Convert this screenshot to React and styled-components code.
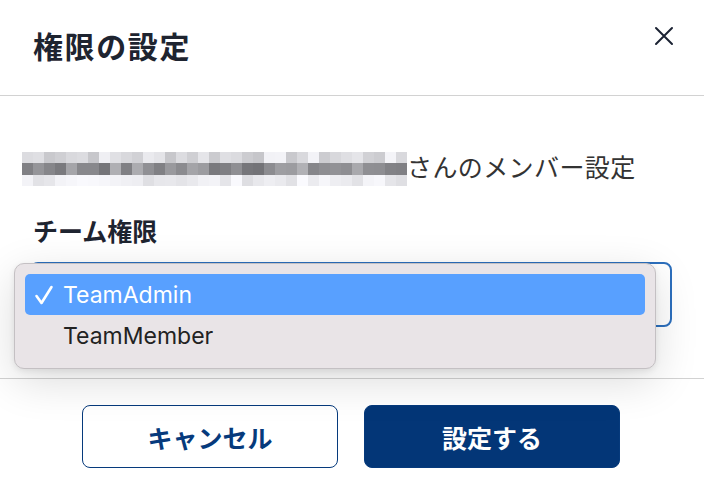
import React from 'react'
import styled, { createGlobalStyle } from 'styled-components'

const GlobalStyle = createGlobalStyle`
  html, body {
    margin: 0;
    padding: 0;
    background: #ffffff;
  }
  body {
    font-family: "Noto Sans CJK JP", "Noto Sans", sans-serif;
    color: #1e2430;
  }
`

// pseudo random greys for the pixelated name
function makeBlocks() {
  let seed = 7
  const rand = () => {
    seed = (seed * 9301 + 49297) % 233280
    return seed / 233280
  }
  const rows = [
    [195, 245],
    [112, 180],
    [222, 250],
  ]
  return rows.map(([lo, hi]) =>
    Array.from({ length: 35 }, () => Math.round(lo + rand() * (hi - lo)))
  )
}

const blocks = makeBlocks()

function App() {
  return (
    <>
      <GlobalStyle />
      <Modal>
        <Header>
          <Title>権限の設定</Title>
          <CloseButton aria-label="close">
            <svg width="20" height="20" viewBox="0 0 20 20">
              <path d="M2 2 L18 18 M18 2 L2 18" stroke="#1b2233" strokeWidth="2" strokeLinecap="round" />
            </svg>
          </CloseButton>
        </Header>
        <Body>
          <MemberLine>
            <Blurred>
              {blocks.map((row, r) =>
                row.map((g, c) => (
                  <Block key={r + '-' + c} style={{ background: `rgb(${g},${g},${g + 4})` }} />
                ))
              )}
            </Blurred>
            <span>さんのメンバー設定</span>
          </MemberLine>
          <Label>チーム権限</Label>
          <SelectWrap>
            <SelectBox />
            <Menu>
              <Option selected>
                <Check>
                  <svg width="20" height="20" viewBox="0 0 20 20">
                    <path d="M2.5 11 L7.5 18 L17.5 2" fill="none" stroke="#fff" strokeWidth="2.6" strokeLinecap="round" strokeLinejoin="round" />
                  </svg>
                </Check>
                TeamAdmin
              </Option>
              <Option>TeamMember</Option>
            </Menu>
          </SelectWrap>
        </Body>
        <Footer>
          <Button>キャンセル</Button>
          <Button primary>設定する</Button>
        </Footer>
      </Modal>
    </>
  )
}

export default App

const Modal = styled.div`
  width: 704px;
  height: 486px;
  background: #fff;
  overflow: hidden;
`

const Header = styled.div`
  height: 96px;
  box-sizing: border-box;
  display: flex;
  justify-content: space-between;
  align-items: flex-start;
  padding: 26px 30px 0 33px;
  border-bottom: 1px solid #d2d2d2;
`

const Title = styled.h1`
  margin: 0;
  font-size: 30px;
  line-height: 38px;
  font-weight: 700;
  letter-spacing: 1.6px;
  color: #1e2430;
`

const CloseButton = styled.button`
  border: none;
  background: transparent;
  padding: 0;
  margin-top: 0;
  width: 20px;
  height: 20px;
  display: flex;
`

const Body = styled.div`
  padding: 55px 32px 0 33px;
`

const MemberLine = styled.div`
  display: flex;
  align-items: center;
  height: 36px;
  margin-left: -11px;
  font-size: 25px;
  letter-spacing: 0.4px;
  color: #333;
  span {
    margin-top: -7px;
  }
`

const Blurred = styled.div`
  display: grid;
  grid-template-columns: repeat(35, 11px);
  grid-auto-rows: 11.5px;
`

const Block = styled.div``

const Label = styled.div`
  margin-top: 26px;
  font-size: 25px;
  line-height: 34px;
  font-weight: 700;
  color: #1e2430;
`

const SelectWrap = styled.div`
  position: relative;
  margin: 15px 0 0 -3px;
  width: 642px;
`

const SelectBox = styled.div`
  height: 65px;
  box-sizing: border-box;
  border: 2px solid #2c6fbd;
  border-radius: 8px;
  background: #fff;
`

const Menu = styled.div`
  position: absolute;
  left: -16px;
  top: 1px;
  width: 642px;
  box-sizing: border-box;
  padding: 10px 10px 12px;
  background: #e9e4e7;
  border: 1px solid #c4c0c3;
  border-radius: 10px;
  box-shadow: 0 12px 44px rgba(0, 0, 0, 0.14), 0 2px 6px rgba(0, 0, 0, 0.08);
`

const Option = styled.div`
  display: flex;
  align-items: center;
  height: 41px;
  padding-left: 38px;
  position: relative;
  border-radius: 5px;
  font-family: Inter, "Liberation Sans", sans-serif;
  font-size: 23px;
  color: ${p => (p.selected ? '#fff' : '#222')};
  background: ${p => (p.selected ? '#58a0ff' : 'transparent')};
`

const Check = styled.span`
  position: absolute;
  left: 9px;
  top: 11px;
  display: flex;
`

const Footer = styled.div`
  margin-top: 51px;
  border-top: 1px solid #d2d2d2;
  display: flex;
  justify-content: center;
  gap: 26px;
  padding: 26px 2px 0 0;
`

const Button = styled.button`
  width: 256px;
  height: 63px;
  box-sizing: border-box;
  border-radius: 8px;
  border: 1px solid #063a7c;
  font-family: "Noto Sans CJK JP", sans-serif;
  font-size: 25px;
  font-weight: 700;
  color: ${p => (p.primary ? '#fff' : '#063a7c')};
  background: ${p => (p.primary ? '#033677' : '#fff')};
`
